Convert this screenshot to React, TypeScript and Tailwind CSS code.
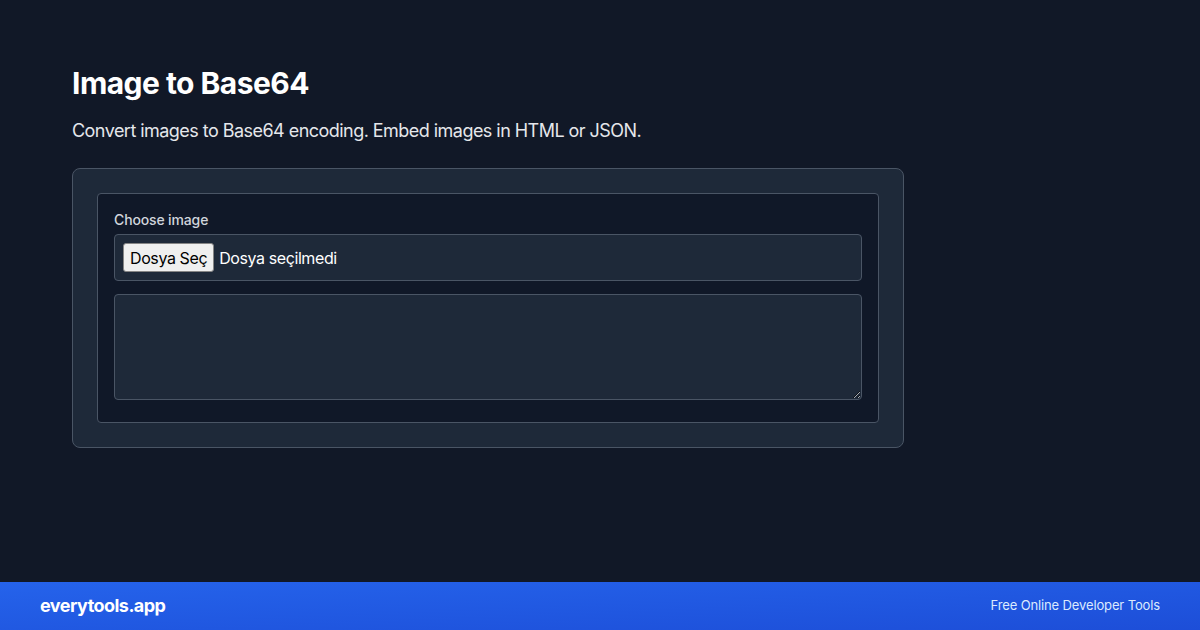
export default function App() {
  return (
    <div className="w-[1200px] h-[630px] flex flex-col bg-[#111827] text-white" style={{ fontFamily: 'Inter, "Noto Sans", sans-serif' }}>
      <main className="flex-1 px-[72px] pt-[65px]">
        <h1 className="text-3xl font-bold text-white leading-9 tracking-[-0.018em]">Image to Base64</h1>
        <p className="mt-4 text-lg leading-7 text-gray-200 tracking-[-0.03em]">Convert images to Base64 encoding. Embed images in HTML or JSON.</p>
        <div className="mt-[23px] w-[832px] rounded-lg border border-gray-600 bg-gray-800 p-6">
          <div className="rounded border border-gray-600 bg-gray-900 p-4">
            <label className="block text-sm font-medium leading-5 text-gray-300 mb-1 tracking-[-0.01em]">Choose image</label>
            <div className="flex items-center h-[47px] rounded border border-gray-600 bg-gray-800 px-2">
              <span className="inline-flex items-center h-[29px] px-[6px] rounded-[3px] border border-[#858585] bg-[#efefef] text-black text-base tracking-[-0.025em]">Dosya Seç</span>
              <span className="ml-[5px] text-base text-white tracking-[-0.025em]">Dosya seçilmedi</span>
            </div>
            <textarea className="mt-[13px] block w-full h-[106px] rounded border border-gray-600 bg-gray-800 p-2 text-sm text-white outline-none" />
            <div className="h-[6px]" />
          </div>
        </div>
      </main>
      <footer className="h-12 flex items-center justify-between px-10 bg-gradient-to-br from-[#2563eb] to-[#1d4ed8]">
        <span className="text-lg font-bold text-white tracking-[-0.03em]">everytools.app</span>
        <span className="text-[13px] text-blue-100 tracking-[-0.01em]">Free Online Developer Tools</span>
      </footer>
    </div>
  );
}
